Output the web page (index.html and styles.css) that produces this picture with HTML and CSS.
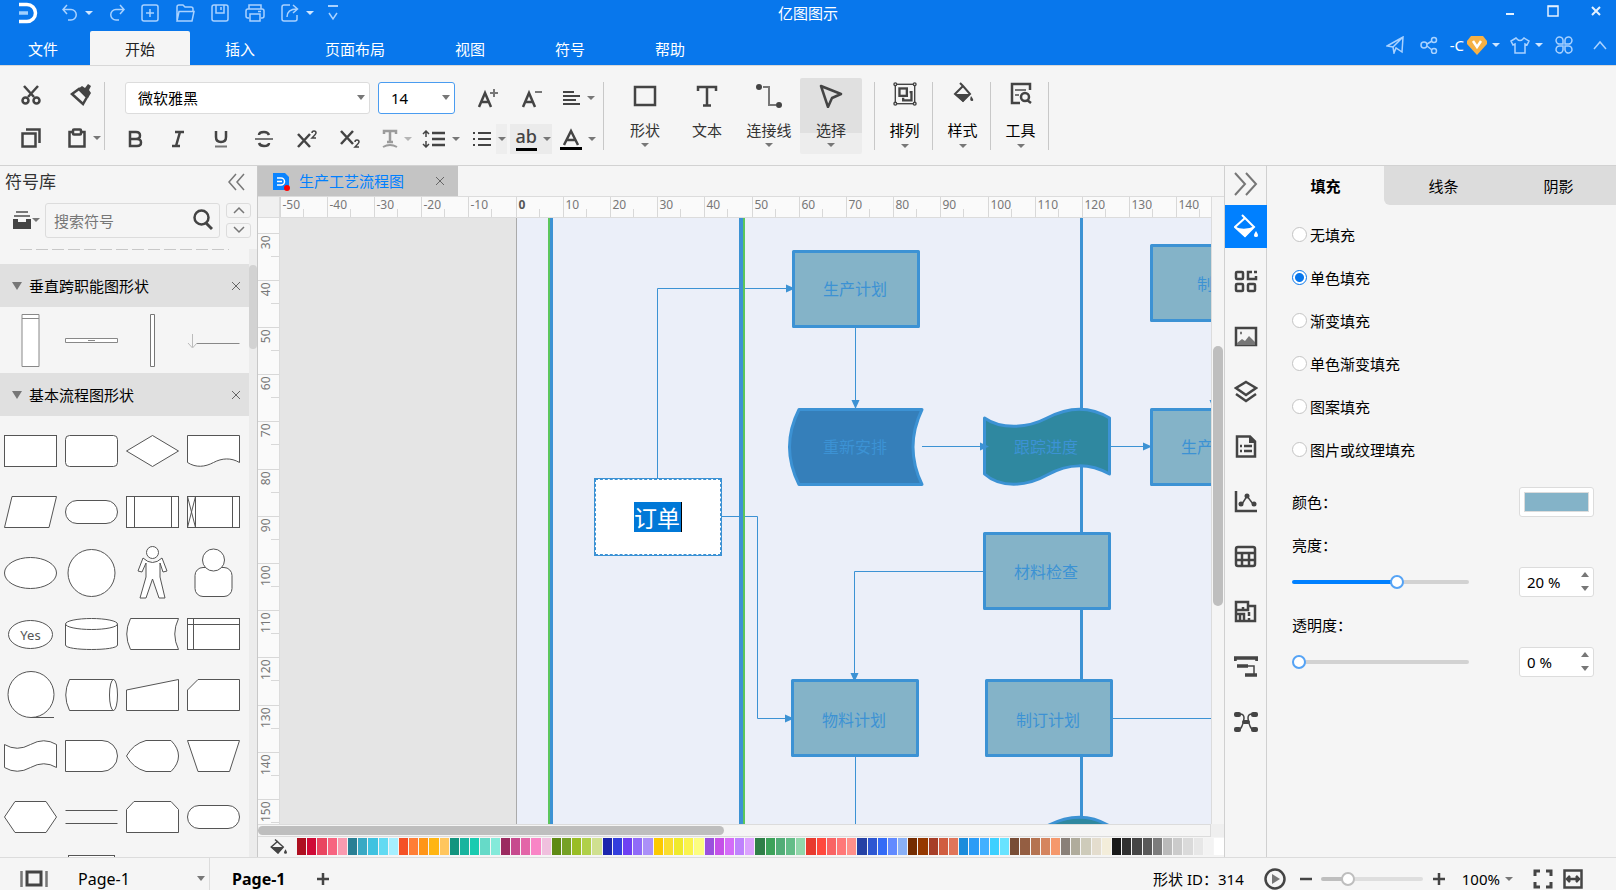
FILE: index.html
```html
<!DOCTYPE html>
<html lang="zh-CN">
<head>
  <meta charset="UTF-8">
  <title>亿图图示</title>
  <link rel="stylesheet" href="styles.css">
</head>
<body>
  <header class="topbar">
    <div class="title-row">
      <svg class="logo" width="20" height="22" viewBox="0 0 20 22"><path d="M1 2.500h8a8 8 0 0 1 0 17H1" fill="none" stroke="#fff" stroke-width="3.500"/><path d="M1 11h9" stroke="#9fd0ff" stroke-width="3.500"/></svg>
      <div class="quick">
        <button class="q-split" aria-label="撤销"><svg width="16" height="18" viewBox="0 0 16 18"><path d="M5 1 1 5.500l4 4.500M1 5.500h8a5 5 0 0 1 0 10.500H6"/></svg><i class="caret"></i></button>
        <button aria-label="重做"><svg width="16" height="18" viewBox="0 0 16 18"><path d="m11 1 4 4.500-4 4.500M15 5.500H7A5 5 0 0 0 7 16h3"/></svg></button>
        <button aria-label="新建"><svg width="18" height="18" viewBox="0 0 18 18"><rect x="1" y="1" width="16" height="16" rx="2"/><path d="M9 5v8M5 9h8"/></svg></button>
        <button aria-label="打开"><svg width="20" height="18" viewBox="0 0 20 18"><path d="M2 16V3q0-2 2-2h4l2 2h6q2 0 2 2v2M2 17 4 7.500h15L17 17z"/></svg></button>
        <button aria-label="保存"><svg width="18" height="18" viewBox="0 0 18 18"><rect x="1" y="1" width="16" height="16" rx="2"/><path d="M5 1v8h8V1M10 3v3"/></svg></button>
        <button aria-label="打印"><svg width="20" height="18" viewBox="0 0 20 18"><path d="M4 5V1h12v4M4 14H3q-2 0-2-2V7q0-2 2-2h14q2 0 2 2v5q0 2-2 2h-1M5 10h10v7H5zM13 7.500h3"/></svg></button>
        <button class="q-split" aria-label="导出"><svg width="18" height="18" viewBox="0 0 18 18"><path d="M9 1H3Q1 1 1 3v12q0 2 2 2h11q2 0 2-2v-4M6 13q0-8 10-8M12 1l4.500 4L12 9"/></svg><i class="caret"></i></button>
        <button class="q-more" aria-label="更多"><svg width="12" height="18" viewBox="0 0 12 18"><path d="M1 2h10" stroke-width="2"/><path d="M2 9l4 6 4-6"/></svg></button>
      </div>
      <h1 class="app-name">亿图图示</h1>
      <div class="window-btns">
        <button aria-label="最小化"><svg width="12" height="12" viewBox="0 0 12 12"><path d="M2 9h8" stroke-width="2"/></svg></button>
        <button aria-label="最大化"><svg width="12" height="12" viewBox="0 0 12 12"><rect x="1" y="1" width="10" height="10"/><path d="M1 1.500h10"/></svg></button>
        <button aria-label="关闭"><svg width="12" height="12" viewBox="0 0 12 12"><path d="m2 2 8 8M10 2l-8 8" stroke-width="2"/></svg></button>
      </div>
    </div>
    <div class="menu-row">
      <nav class="menu">
        <a href="#" class="file">文件</a>
        <a href="#" class="active">开始</a>
        <a href="#">插入</a>
        <a href="#">页面布局</a>
        <a href="#">视图</a>
        <a href="#">符号</a>
        <a href="#">帮助</a>
      </nav>
      <div class="account">
        <button aria-label="发送"><svg width="18" height="18" viewBox="0 0 18 18"><path d="M1 10 17 1l-1 15-6-4-2 5-1-6zM17 1 7 11"/></svg></button>
        <button class="share" aria-label="分享"><svg width="18" height="18" viewBox="0 0 18 18"><circle cx="4" cy="9" r="3"/><circle cx="14" cy="4" r="2.500"/><circle cx="14" cy="15" r="2.500"/><path d="m7 8 5-3M7 10l5 4"/></svg></button>
        <button class="user">-C<svg class="vip" width="20" height="19" viewBox="0 0 20 19"><path d="M4 0h12l4 5v3L10 19 0 8V5z" fill="#f6b145" stroke="none"/><path d="m6 5 4 6 4-6" fill="none" stroke="#fff" stroke-width="2.500"/></svg><i class="caret"></i></button>
        <button class="skin" aria-label="皮肤"><svg width="20" height="18" viewBox="0 0 20 18"><path d="M6 2 1 5l2 4 2-1v9h10V8l2 1 2-4-5-3q-4 5-8 0z"/></svg><i class="caret"></i></button>
        <button aria-label="应用"><svg width="18" height="18" viewBox="0 0 18 18"><path d="M8 8H5a3.500 3.500 0 1 1 3-4zM10 8h3a3.500 3.500 0 1 0-3-4zM8 10H5a3.500 3.500 0 1 0 3 4zM10 10h3a3.500 3.500 0 1 1-3 4z"/></svg></button>
        <button class="fold" aria-label="折叠功能区"><svg width="14" height="10" viewBox="0 0 14 10"><path d="m1 9 6-7 6 7"/></svg></button>
      </div>
    </div>
  </header>

  <section class="ribbon">
    <div class="clip-group">
      <button class="tool" aria-label="剪切"><svg width="20" height="20" viewBox="0 0 20 20"><path d="M3 1l10 11M17 1L7 12"/><circle cx="4.500" cy="15.500" r="3"/><circle cx="15.500" cy="15.500" r="3"/></svg></button>
      <button class="tool" aria-label="格式刷"><svg width="22" height="22" viewBox="0 0 22 22"><path d="m2 10 7-5 8 8-4 7z"/><path class="fill" d="m8 5 4-3 3 2 3-4 3 2-2 4 2 3-3 5z"/></svg></button>
      <button class="tool" aria-label="复制"><svg width="20" height="20" viewBox="0 0 20 20"><rect x="1.500" y="5.500" width="13" height="13"/><path d="M5 1.500h13.500V15"/></svg></button>
      <button class="tool split paste" aria-label="粘贴"><svg width="20" height="20" viewBox="0 0 20 20"><path d="M6 4H2.500v14.500h15V4H14"/><rect x="6" y="1.500" width="8" height="5" rx="1"/></svg><i class="caret"></i></button>
    </div>
    <span class="sep"></span>
    <div class="font-group">
      <div class="row row-fonts">
        <span class="select-box name"><select aria-label="字体"><option>微软雅黑</option></select></span>
        <span class="select-box size"><select aria-label="字号"><option>14</option></select></span>
        <div class="row-tools">
          <button class="tool" aria-label="增大字号"><svg width="22" height="22" viewBox="0 0 22 22"><path d="m2 20 6-14 6 14M4 15h8"/><path d="M17 2v8M13 6h8" stroke="#777" stroke-width="2"/></svg></button>
          <button class="tool" aria-label="减小字号"><svg width="22" height="22" viewBox="0 0 22 22"><path d="m2 20 6-14 6 14M4 15h8"/><path d="M14 5h7" stroke="#777" stroke-width="2"/></svg></button>
          <button class="tool split" aria-label="对齐"><svg width="20" height="16" viewBox="0 0 20 16"><path d="M2 2h11M2 6h17M2 10h13M2 14h17" stroke-width="2"/></svg><i class="caret"></i></button>
        </div>
      </div>
      <div class="row row-style">
        <button class="tool" aria-label="加粗"><svg width="16" height="18" viewBox="0 0 16 18"><path d="M3 2h6q4 0 4 3.500T9 9H3zM3 9h7q4 0 4 3.500T10 16H3z"/></svg></button>
        <button class="tool" aria-label="倾斜"><svg width="16" height="18" viewBox="0 0 16 18"><path d="M5 2h9M2 16h8M10 2 6 16"/></svg></button>
        <button class="tool" aria-label="下划线"><svg width="16" height="18" viewBox="0 0 16 18"><path d="M3 1v6q0 5 5 5t5-5V1"/><path d="M2 16.500h12" stroke="#777" stroke-width="2"/></svg></button>
        <button class="tool" aria-label="删除线"><svg width="20" height="18" viewBox="0 0 20 18"><path d="M15 5q-1-3-5-3-5 0-5 3M5 13q1 3 5 3 5 0 5-3"/><path d="M1 9h18" stroke="#777" stroke-width="2"/></svg></button>
        <button class="tool" aria-label="上标"><svg width="22" height="18" viewBox="0 0 22 18"><path d="m2 4 12 13M14 4 2 17"/><path d="M16 3q0-2 2-2t2 2q0 1-4 5h4" stroke-width="1.500"/></svg></button>
        <button class="tool" aria-label="下标"><svg width="22" height="18" viewBox="0 0 22 18"><path d="m2 1 12 13M14 1 2 14"/><path d="M16 12q0-2 2-2t2 2q0 1-4 5h4" stroke-width="1.500"/></svg></button>
        <button class="tool split dim" aria-label="文字效果"><svg width="16" height="20" viewBox="0 0 16 20"><path d="M2 5V2h12v3M8 2v11M5 13h6"/><path d="M1 18q7-4 14 0" stroke-width="2"/></svg><i class="caret"></i></button>
        <button class="tool split spacing" aria-label="行距"><svg width="24" height="18" viewBox="0 0 24 18"><path d="M10 3h13M10 9h13M10 15h13"/><path d="M4 1v6M1 4l3-3 3 3M4 17v-6M1 14l3 3 3-3" stroke-width="1.500"/></svg><i class="caret"></i></button>
        <button class="tool split list" aria-label="项目符号"><svg width="20" height="18" viewBox="0 0 20 18"><path d="M6 3h13M6 9h13M6 15h13M1 3h2M1 9h2M1 15h2" stroke-width="2"/></svg><i class="caret"></i></button>
        <button class="tool split mark" aria-label="突出显示"><span class="ink">ab</span><i class="caret"></i></button>
        <button class="tool split colour" aria-label="字体颜色"><svg width="22" height="22" viewBox="0 0 22 22"><path d="m4 17 7-14 7 14M7 12h8"/><path d="M0 20.500h22" stroke="#000" stroke-width="3"/></svg><i class="caret"></i></button>
      </div>
    </div>
    <span class="sep"></span>
    <div class="insert-group">
      <button class="big"><svg width="24" height="24" viewBox="0 0 24 24"><rect x="2" y="3" width="20" height="18"/></svg><span>形状</span><i class="caret"></i></button>
      <button class="big"><svg width="24" height="24" viewBox="0 0 24 24"><path d="M3 7V3h18v4M12 3v18M8 21.500h8"/></svg><span>文本</span></button>
      <button class="big"><svg width="26" height="24" viewBox="0 0 26 24"><path d="M7 3h6v18h7" stroke="#777" stroke-width="2"/><circle class="fill" cx="3" cy="3" r="3"/><circle class="fill" cx="23" cy="21" r="3"/></svg><span>连接线</span><i class="caret"></i></button>
      <button class="big pressed"><svg width="24" height="24" viewBox="0 0 24 24"><path d="m2 2 20 8-9 4-4 9z" stroke-linejoin="round"/></svg><span>选择</span><i class="caret"></i></button>
    </div>
    <div class="format-group">
      <button class="big"><svg width="26" height="26" viewBox="0 0 26 26"><rect x="2.500" y="2.500" width="21" height="21" stroke-width="1.500"/><g fill="#f5f5f5" stroke-width="1.500"><circle cx="2.500" cy="2.500" r="1.500"/><circle cx="23.500" cy="2.500" r="1.500"/><circle cx="2.500" cy="23.500" r="1.500"/><circle cx="23.500" cy="23.500" r="1.500"/></g><rect x="7" y="7" width="8" height="8"/><path d="M18 11h2v9h-9v-3"/></svg><span>排列</span><i class="caret"></i></button>
      <button class="big"><svg width="24" height="24" viewBox="0 0 24 24"><path d="m9 1 3 3 7 8-7 7-8-7 8-8" stroke-width="2"/><path class="fill" d="M4 12h15l-7 8zM20 14q4 5 1 5t-1-5z"/></svg><span>样式</span><i class="caret"></i></button>
      <button class="big"><svg width="24" height="24" viewBox="0 0 24 24"><path d="M21 8V2H3v19h8M22 21l-4-3"/><path d="M6 8h11M6 13h4" stroke="#777" stroke-width="2"/><circle cx="16" cy="15" r="4"/></svg><span>工具</span><i class="caret"></i></button>
    </div>
  </section>

  <main class="main">
    <aside class="library">
      <div class="lib-head">
        <h2>符号库</h2>
        <button aria-label="收起"><svg width="18" height="18" viewBox="0 0 18 18"><path d="M8 1 1 9l7 8M16 1 9 9l7 8" fill="none" stroke="#777" stroke-width="1.500"/></svg></button>
      </div>
      <div class="lib-search">
        <button class="lib-menu" aria-label="符号库菜单"><svg width="18" height="18" viewBox="0 0 18 18"><path d="M3 1h12M1 5h16" stroke="#777" stroke-width="2"/><path fill="#444" d="M0 8h5v3h8V8h5v10H0z"/></svg><i class="caret"></i></button>
        <div class="search-box">
          <input type="text" placeholder="搜索符号" aria-label="搜索符号">
          <svg width="20" height="22" viewBox="0 0 20 22"><circle cx="8.500" cy="8.500" r="7" fill="none" stroke="#444" stroke-width="2.500"/><path d="m13 14 6 6" stroke="#444" stroke-width="3"/></svg>
        </div>
        <div class="lib-nav">
          <button aria-label="上一个"><svg width="12" height="8" viewBox="0 0 12 8"><path d="m1 7 5-5 5 5" fill="none" stroke="#777" stroke-width="1.500"/></svg></button>
          <button aria-label="下一个"><svg width="12" height="8" viewBox="0 0 12 8"><path d="m1 1 5 5 5-5" fill="none" stroke="#777" stroke-width="1.500"/></svg></button>
        </div>
      </div>
      <div class="lib-body">
        <div class="lib-list">
          <div class="lib-tail"></div>
          <div class="lib-section"><i class="fold-mark"></i><h3>垂直跨职能图形状</h3><button class="close" aria-label="关闭"><svg width="10" height="10" viewBox="0 0 10 10"><path d="m1 1 8 8M9 1 1 9"/></svg></button></div>
          <div class="lanes">
            <svg width="55" height="55" viewBox="0 0 55 55"><g stroke="#888"><path d="M19 1.500h17v52H19zM19 5.500h17" /></g></svg>
            <svg width="55" height="55" viewBox="0 0 55 55"><g stroke="#888"><path d="M1.500 25.500h52v4h-52zM24 27.500h7"/></g></svg>
            <svg width="55" height="55" viewBox="0 0 55 55"><g stroke="#777"><path d="M25.500 1.500h4v52h-4z"/></g></svg>
            <svg width="55" height="55" viewBox="0 0 55 55"><path d="M10.500 30.500h43" stroke="#888"/><path d="M6.500 21v13M2 30l4.500 5 4.500-5" stroke="#bbb" fill="none"/></svg>
          </div>
          <div class="lib-section"><i class="fold-mark"></i><h3>基本流程图形状</h3><button class="close" aria-label="关闭"><svg width="10" height="10" viewBox="0 0 10 10"><path d="m1 1 8 8M9 1 1 9"/></svg></button></div>
          <div class="shapes" id="shapes"></div>
        </div>
        <div class="lib-scroll"><div class="thumb"></div></div>
      </div>
    </aside>

    <section class="workspace">
      <div class="doc-tabs">
        <div class="doc-tab">
          <svg width="18" height="19" viewBox="0 0 18 19"><path d="M0 1h12l4 4v13H0z" fill="#0a84ff"/><path d="M4 6h4a3.500 3.500 0 0 1 0 7H4M4 9.500h5" fill="none" stroke="#fff" stroke-width="1.500"/><circle cx="14" cy="16" r="3" fill="#f00"/></svg>
          <span>生产工艺流程图</span>
          <button class="close" aria-label="关闭文档"><svg width="10" height="10" viewBox="0 0 10 10"><path d="m1 1 8 8M9 1 1 9"/></svg></button>
        </div>
      </div>
      <div class="stage">
        <div class="corner"></div>
        <svg class="ruler-x" id="rulerX"></svg>
        <div class="gutter"></div>
        <svg class="ruler-y" id="rulerY"></svg>
        <div class="canvas">
          <svg class="drawing">
            <defs>
              <marker id="arrow" markerUnits="userSpaceOnUse" markerWidth="9" markerHeight="9" refX="8" refY="4.500" orient="auto"><path d="M0 0.500 9 4.500 0 8.500z" fill="#3c92d4"/></marker>
            </defs>
            <g transform="translate(-280 -218)">
              <rect x="517" y="0" width="1200" height="1200" fill="#ebeff9"/>
              <path d="M516.500 0v1200" stroke="#aaa"/>
              <path d="M1081.500 0v1200" stroke="#3c92d4" stroke-width="3"/>

              <g class="link">
                <path d="M657.500 478V288.500H794" marker-end="url(#arrow)"/>
                <path d="M722 516.500h35.500v202H793" marker-end="url(#arrow)"/>
                <path d="M855.500 328v80" marker-end="url(#arrow)"/>
                <path d="M983 571.500H854.500V681" marker-end="url(#arrow)"/>
                <path d="M855.500 757v200M1113 718.500h200"/>
                <path d="M1111 446.500h40" marker-end="url(#arrow)"/>
                <path d="M1213.500 380v28" marker-end="url(#arrow)"/>
              </g>

              <path d="M549 0v1200M744 0v1200" stroke="#5cc65c" stroke-width="2"/>
              <path d="M551.500 0v1200" stroke="#3c92d4" stroke-width="3"/>
              <path d="M741 0v1200" stroke="#3c92d4" stroke-width="4"/>

              <g class="node">
                <rect x="793.500" y="251.500" width="125" height="75"/>
                <rect x="1151.500" y="245.500" width="125" height="75"/>
                <rect x="1151.500" y="409.500" width="125" height="75"/>
                <rect x="984.500" y="533.500" width="125" height="75"/>
                <rect x="792.500" y="680.500" width="125" height="75"/>
                <rect x="986.500" y="680.500" width="125" height="75"/>
                <path class="stored" d="M799 409.500H922Q904 447 922 484.500H799Q780 447 799 409.500z"/>
                <path class="tape" id="wave" d="M984.500 418C1000 429 1026 429 1047 418S1090 406 1109.500 418V474C1090 463 1068 463 1047 475S1000 488 984.500 474z"/>
                <use href="#wave" y="408"/>
              </g>
              <path class="link" d="M922 446.500h66" marker-end="url(#arrow)"/>

              <g class="label">
                <text x="855" y="295">生产计划</text>
                <text x="855" y="453">重新安排</text>
                <text x="1046" y="453">跟踪进度</text>
                <text x="1046" y="578">材料检查</text>
                <text x="854" y="726">物料计划</text>
                <text x="1048" y="726">制订计划</text>
                <text x="1205" y="290">制</text>
                <text x="1197" y="453">生产</text>
              </g>
            </g>
          </svg>
          <div class="editing"><input type="text" value="订单" aria-label="形状文本"></div>
        </div>
        <div class="scroll-y"><div class="thumb"></div></div>
      </div>
      <div class="scroll-x"><div class="track"><div class="thumb"></div></div></div>
      <div class="palette">
        <button class="palette-fill" aria-label="填充颜色"><svg width="18" height="18" viewBox="0 0 24 24"><path d="m8 2 11 10-7 8-9-8 9-8" fill="none" stroke="#444" stroke-width="2"/><path d="M3 12h16l-7 9zM22 15q4 6 0 6t0-6z" fill="#444"/></svg></button>
        <div class="swatches" id="swatches"></div>
      </div>
    </section>

    <nav class="side-bar">
      <button class="expand" aria-label="展开"><svg width="24" height="24" viewBox="0 0 24 24"><path d="m1 1 10 11L1 23M12 1l10 11-10 11" stroke="#777"/></svg></button>
      <button class="active" aria-label="填充"><svg width="24" height="26" viewBox="0 0 24 26"><path d="m8 1 3 3 9 9-9 9-10-9 10-9" stroke="#fff"/><path d="M1 13q10 4 20-1l-10 11zM22 17q4 6 0 6t0-6z" fill="#fff" stroke="none"/></svg></button>
      <button aria-label="主题"><svg width="24" height="24" viewBox="0 0 24 24"><rect x="2" y="2" width="7" height="7" rx="1"/><path d="M18 2h-4v7h8V6M20 2h3"/><rect x="2" y="14" width="7" height="7" rx="1"/><rect x="14" y="14" width="7" height="7" rx="1"/></svg></button>
      <button aria-label="图片"><svg width="24" height="24" viewBox="0 0 24 24"><rect x="2" y="3" width="20" height="17"/><path d="m3 18 5-4 3 2 4-5 6 6v3H3z" fill="#777" stroke="none"/><path d="M6 8h2" stroke="#777"/></svg></button>
      <button aria-label="图层"><svg width="24" height="24" viewBox="0 0 24 24"><path d="m12 2 10 6-10 7L2 8zM2 14l10 7 10-7"/></svg></button>
      <button aria-label="备注"><svg width="24" height="24" viewBox="0 0 24 24"><path d="M3 1.500h13l5 5v15H3zM10 11h8M10 16h8M6 11h2M6 16h2"/><path class="fill" d="M15 1l7 7h-7z"/></svg></button>
      <button aria-label="图表"><svg width="24" height="24" viewBox="0 0 24 24"><path d="M2 1v20h21"/><path d="m8 14 5-8 6 8" stroke-width="1.500"/><g class="fill"><circle cx="7" cy="14" r="2.500"/><circle cx="13" cy="6" r="2.500"/><circle cx="20" cy="14" r="2.500"/></g></svg></button>
      <button aria-label="表格"><svg width="24" height="24" viewBox="0 0 24 24"><rect x="2" y="2" width="19" height="19" rx="2"/><path d="M2 8h19M2 15h19M8 8v13M15 8v13"/></svg></button>
      <button aria-label="平面图"><svg width="24" height="24" viewBox="0 0 24 24"><path d="M2 2h12v4h7v15H2zM2 10h7V7M14 6v4h-4M2 14h8v7M6 14v7M15 12v4M15 18v3"/></svg></button>
      <button aria-label="甘特图"><svg width="24" height="24" viewBox="0 0 24 24"><path d="M1 6V3h22v3M3 11h11M11 20h12" stroke-width="3.500"/><path d="M13 11h7v9" stroke-width="1.500"/></svg></button>
      <button aria-label="思维导图"><svg width="24" height="24" viewBox="0 0 24 24"><path d="M6 4q4 0 4 4t-2 8q-1 3-3 3M18 4q-4 0-4 4t2 8q1 3 3 3M9 12h6" stroke-width="1.500"/><g class="fill"><rect x="0" y="2" width="7" height="5" rx="2"/><rect x="17" y="2" width="7" height="5" rx="2"/><rect x="0" y="17" width="7" height="5" rx="2"/><rect x="17" y="17" width="7" height="5" rx="2"/><rect x="8" y="10" width="8" height="4" rx="2"/></g></svg></button>
    </nav>

    <aside class="props">
      <div class="prop-tabs">
        <button class="active">填充</button>
        <div class="rest"><button>线条</button><button>阴影</button></div>
      </div>
      <form class="prop-body">
        <label class="radio"><input type="radio" name="fill">无填充</label>
        <label class="radio"><input type="radio" name="fill" checked>单色填充</label>
        <label class="radio"><input type="radio" name="fill">渐变填充</label>
        <label class="radio"><input type="radio" name="fill">单色渐变填充</label>
        <label class="radio"><input type="radio" name="fill">图案填充</label>
        <label class="radio"><input type="radio" name="fill">图片或纹理填充</label>
        <div class="field colour-field">
          <label for="fillColour">颜色：</label>
          <input type="color" id="fillColour" value="#84b3c8">
        </div>
        <label class="field-label" for="light">亮度：</label>
        <div class="field">
          <input type="range" class="light" id="light" min="-100" max="100" value="20">
          <div class="spin"><input type="text" value="20 %" aria-label="亮度值"><button type="button" aria-label="增加"></button><button type="button" class="down" aria-label="减少"></button></div>
        </div>
        <label class="field-label" for="alpha">透明度：</label>
        <div class="field">
          <input type="range" id="alpha" min="0" max="100" value="0">
          <div class="spin"><input type="text" value="0 %" aria-label="透明度值"><button type="button" aria-label="增加"></button><button type="button" class="down" aria-label="减少"></button></div>
        </div>
      </form>
    </aside>
  </main>

  <footer class="status">
    <button class="views" aria-label="页面视图"><svg width="28" height="18" viewBox="0 0 28 18"><path d="M1.500 1v16M26.500 1v16" stroke="#777"/><rect x="7" y="2" width="14" height="13" stroke-width="3"/></svg></button>
    <span class="select-box page"><select aria-label="页面"><option>Page-1</option></select></span>
    <button class="page-tab">Page-1</button>
    <button class="add" aria-label="新建页面"><svg width="14" height="14" viewBox="0 0 14 14"><path d="M7 1v12M1 7h12"/></svg></button>
    <span class="shape-id">形状 ID：314</span>
    <button class="play" aria-label="播放"><svg width="22" height="22" viewBox="0 0 22 22"><circle cx="11" cy="11" r="9.500"/><path d="m8 6 8 5-8 5z" fill="#777" stroke="none"/></svg></button>
    <button class="minus" aria-label="缩小"><svg width="14" height="14" viewBox="0 0 14 14"><path d="M1 7h12"/></svg></button>
    <input type="range" class="zoom" aria-label="缩放" min="0" max="100" value="23">
    <button class="plus" aria-label="放大"><svg width="14" height="14" viewBox="0 0 14 14"><path d="M7 1v12M1 7h12"/></svg></button>
    <button class="percent">100%<i class="caret"></i></button>
    <button class="full" aria-label="全屏"><svg width="20" height="20" viewBox="0 0 20 20"><path d="M2 7V2h5M13 2h5v5M18 13v5h-5M7 18H2v-5" stroke-width="3"/></svg></button>
    <button class="fit" aria-label="适合宽度"><svg width="20" height="20" viewBox="0 0 20 20"><rect x="1.500" y="1.500" width="17" height="17"/><path d="M5 10h10M7 7l-3 3 3 3M13 7l3 3-3 3"/></svg></button>
  </footer>

  <script>
    const NS = "http://www.w3.org/2000/svg";

    // Basic flowchart symbols, drawn in a 55 x 55 cell
    const pill = '<rect x="1.5" y="16.5" width="52" height="23" rx="11.5"/>';
    const box = '<rect x="1.5" y="12.5" width="52" height="31"/>';
    const shapes = [
      box,
      '<rect x="1.5" y="12.5" width="52" height="31" rx="4"/>',
      '<path d="M1.5 28 27.500 12.500 53.500 28 27.500 43.500z"/>',
      '<path d="M1.5 12.500H53.500V39.500C45 34.500 36 35 27.500 39.500S10 45 1.500 39.500z"/>',
      '<path d="M9 12.500H53.500L46 43.500H1.500z"/>',
      pill,
      box + '<path d="M9.500 12.500v31M46.500 12.500v31"/>',
      box + '<path d="M9.500 12.500v31M46.500 12.500v31M1.500 12.500l8 31M9.500 12.500l-8 31"/>',
      '<ellipse cx="27.5" cy="28" rx="26" ry="15.5"/>',
      '<circle cx="27.5" cy="28" r="23.5"/>',
      '<circle cx="27.5" cy="7.5" r="6"/><path d="M18 13 13 26l4 1 4-9v14l-6 21h6l6.500-19L34 53h6l-5-21V18l3 9 4-1-5-13q-9.500 9-19 0z"/>',
      '<rect x="9" y="22.5" width="37" height="29" rx="8"/><circle cx="27.5" cy="15" r="11"/>',
      '<ellipse cx="27.5" cy="28.5" rx="22" ry="14"/><text x="27.5" y="34">Yes</text>',
      '<path d="M1.500 18v21c0 6 52 6 52 0V18"/><ellipse cx="27.5" cy="18" rx="26" ry="5.5"/>',
      '<path d="M5.500 12.500h48Q46 28 53.500 43.500h-48Q-2 28 5.500 12.500z"/>',
      box + '<path d="M1.500 18.500h52M7.500 12.500v31"/>',
      '<circle cx="28" cy="27.5" r="23"/><path d="M28 50.500h23"/>',
      '<path d="M5.500 12.500H49.500V43.500H5.500Q-2 28 5.500 12.500z"/><ellipse cx="49.5" cy="28" rx="4" ry="15.5"/>',
      '<path d="M1.500 23 53.500 12.500v31h-52z"/>',
      '<path d="M12 12.500h41.500v31h-52V23z"/>',
      '<path d="M1.500 16.500Q14 24 27.500 16.500T53.500 16.500V39.500Q41 32 27.500 39.500T1.500 39.500z"/>',
      '<path d="M1.500 12.500H38a15.500 15.500 0 0 1 0 31H1.500z"/>',
      '<path d="M21 12.500H46Q53.500 20 53.500 28T46 43.500H21Q8 40 1.500 28 8 16 21 12.500z"/>',
      '<path d="M1.500 12.500h52l-10 31H12z"/>',
      '<path d="M12 12.500h31L53.500 28 43 43.500H12L1.500 28z"/>',
      '<path d="M1.500 21.500h52M1.500 34.500h52"/>',
      '<path d="M9 12.500h37l7.500 8v23h-52v-23z"/>',
      pill,
      '',
      '<rect x="4.500" y="5.500" width="46" height="44"/>'
    ];
    document.getElementById("shapes").innerHTML = shapes
      .map(s => `<svg width="55" height="55" viewBox="0 0 55 55">${s}</svg>`)
      .join("");

    // Quick colours, five shades in a group
    const colours = [
      "#ae0f20 #cf0a36 #e94560 #f76480 #f99bb0", "#297f94 #39a9c4 #3fc2e0 #62daf2 #a6efff",
      "#f45126 #ff7e36 #ff9518 #ffb512 #ffc65e", "#12947e #18b49e #1acbb0 #66dac8 #84eada",
      "#9b2a60 #c74a8e #e366a8 #f985c6 #f0c0de", "#5f8a14 #76a125 #99bd25 #b0d04a #d0e090",
      "#1c26ad #333edd #6e40f3 #906bf8 #ab90f8", "#fcc900 #fadd2e #efe92c #faf34e #fcfd80",
      "#9b50de #c550e8 #d46cf8 #bf82fd #dca2fe", "#2f7f48 #3da25a #52ad77 #64bd88 #92d7ab",
      "#e83a2e #ff493d #f96464 #ff7878 #ff908a", "#2541a4 #2e57d2 #346bf6 #628aff #8ab0f6",
      "#742c00 #953800 #a63e28 #d05d40 #e0755a", "#1a8cdc #2b9cf6 #42b0ff #3dd0ff #68e3ff",
      "#784d36 #945e42 #b57350 #d5855f #f5986c", "#8a8078 #b0ac9c #cecbba #e4ddce #f3edda",
      "#191919 #303030 #454545 #595959 #7c7c7c", "#bababa #cbcbcb #dadada #e7e7e7 #f3f3f3",
      "#ffffff"
    ];
    document.getElementById("swatches").innerHTML = colours
      .map(g => g.split(" ").map(c => `<button style="background:${c}" aria-label="${c}"></button>`).join(""))
      .map(g => `<div class="shades">${g}</div>`)
      .join("");

    // Rulers: 10 mm is 47.2 px on screen
    const STEP = 47.2;

    function add(parent, name, attrs, text) {
      const el = document.createElementNS(NS, name);
      for (const k in attrs) el.setAttribute(k, attrs[k]);
      if (text !== undefined) el.textContent = text;
      parent.appendChild(el);
    }

    function drawRulers() {
      const rx = document.getElementById("rulerX");
      const ry = document.getElementById("rulerY");
      rx.innerHTML = ry.innerHTML = "";

      const w = rx.getBoundingClientRect().width;
      for (let i = 0; i * STEP + 26 < w; i++) {
        const x = Math.floor(i * STEP) + 0.5;
        const mm = i * 10 - 50;
        add(rx, "path", { d: `M${x} 0v20M${x + 23} 12v8` });
        add(rx, "text", { x: x + 2, y: 12, class: mm === 0 ? "zero" : "" }, mm);
      }

      const h = ry.getBoundingClientRect().height;
      for (let i = 0; i * STEP + 38 < h; i++) {
        const y = Math.floor(i * STEP) + 15.5;
        add(ry, "path", { d: `M0 ${y}h21M13 ${y + 23}h8` });
        add(ry, "text", { transform: `translate(12 ${y + 2}) rotate(-90)`, "text-anchor": "end" }, i * 10 + 30);
      }
    }

    drawRulers();
    window.addEventListener("resize", drawRulers);
  </script>
</body>
</html>
```
FILE: styles.css
```css
* {
  box-sizing: border-box;
}

html, body {
  margin: 0;
  height: 100%;
}

body {
  display: flex;
  flex-direction: column;
  overflow: hidden;
  background: #f5f5f5;
  color: #000;
  font-family: "Noto Sans", "Noto Sans CJK SC", sans-serif;
  font-size: 15px;
  line-height: 20px;
}

button, input, select {
  font: inherit;
  color: inherit;
}

button {
  display: flex;
  align-items: center;
  justify-content: center;
  margin: 0;
  padding: 0;
  border: 0;
  background: none;
}

h1, h2, h3 {
  margin: 0;
  font-weight: normal;
}

svg {
  display: block;
  flex: none;
}

.caret {
  flex: none;
  border: 4px solid transparent;
  border-top-color: #777;
  border-bottom: 0;
}

.close {
  width: 20px;
  height: 20px;
}

.close svg {
  fill: none;
  stroke: #666;
}

/* top bar */
.topbar {
  flex: none;
  background: #0877ec;
  color: #fff;
}

.topbar .caret {
  border-top-color: #cfe6ff;
}

.topbar button svg {
  fill: none;
  stroke: #a9d2ff;
  stroke-width: 1.5;
}

.title-row {
  position: relative;
  display: flex;
  align-items: center;
  justify-content: space-between;
  height: 25px;
  padding: 0 14px 0 18px;
}

.quick {
  display: flex;
  flex: 1;
  gap: 16px;
  margin-left: 24px;
}

.q-split {
  gap: 7px;
}

.q-more {
  margin-left: -3px;
}

.app-name {
  position: absolute;
  left: 50%;
  transform: translateX(-50%);
  font-size: 15px;
}

.window-btns {
  display: flex;
  gap: 31px;
  margin-bottom: 4px;
}

.topbar .window-btns svg {
  stroke: #e4f1ff;
}

.menu-row {
  display: flex;
  justify-content: space-between;
  height: 40px;
  padding: 6px 9px 0 0;
}

.menu {
  display: flex;
}

.menu a {
  padding: 8px 35px 0;
  color: #fff;
  text-decoration: none;
}

.menu .file {
  padding: 8px 32px 0 28px;
}

.menu .active {
  background: #f5f5f5;
  color: #222;
  border-radius: 2px 2px 0 0;
}

.account {
  display: flex;
  align-items: center;
  gap: 16px;
  padding-bottom: 6px;
}

.user {
  gap: 3px;
  margin-left: -4px;
}

.user .caret {
  margin-left: 2px;
}

.skin {
  gap: 5px;
  margin-left: -6px;
}

.skin + button {
  margin-left: -4px;
}

.fold {
  margin-left: 4px;
}

/* ribbon */
.ribbon {
  display: flex;
  flex: none;
  height: 101px;
  padding: 8px 0;
  border-top: 1px solid #d8d8d8;
  border-bottom: 1px solid #d2d2d2;
}

.ribbon svg {
  fill: none;
  stroke: #444;
  stroke-width: 2.5;
}

.ribbon .fill, .side-bar .fill {
  fill: #444;
  stroke: none;
}

.sep {
  width: 1px;
  height: 68px;
  margin-top: 8px;
  background: #c8c8c8;
}

.clip-group {
  display: grid;
  grid-template-columns: 40px 40px;
  grid-template-rows: 42px 44px;
  column-gap: 10px;
  padding: 0 3px 0 11px;
}

.tool {
  width: 40px;
}

.split {
  justify-content: flex-end;
  gap: 6px;
  padding-right: 1px;
}

.paste {
  padding-right: 0;
}

.font-group {
  display: flex;
  flex-direction: column;
  padding: 0 6px 0 10px;
}

.row {
  display: flex;
  height: 42px;
}

.row-fonts {
  align-items: center;
  gap: 8px;
  padding: 6px 0 0 10px;
}

.row-tools {
  display: flex;
  gap: 4px;
  margin-left: 5px;
}

.row-style {
  gap: 3px;
}

.row-style .tool {
  height: 30px;
  margin-top: 8px;
}

.select-box {
  position: relative;
  display: block;
}

.select-box::after {
  content: "";
  position: absolute;
  top: 13px;
  right: 5px;
  border: 4px solid transparent;
  border-top: 5px solid #777;
  border-bottom: 0;
}

.select-box select {
  width: 100%;
  height: 32px;
  padding: 0 12px;
  appearance: none;
  background: #fff;
  border: 1px solid #dcdcdc;
  border-radius: 3px;
}

.name {
  width: 245px;
}

.size {
  width: 77px;
}

.select-box.size select {
  border-color: #4a9cf0;
}

.dim {
  opacity: 0.5;
}

.row-style .spacing {
  width: 45px;
}

.row-style .list {
  width: 43px;
  background: linear-gradient(to right, transparent 32px, #eee 32px);
}

.row-style .mark, .row-style .colour {
  width: 42px;
}

.mark {
  background: #ebebeb;
}

.ink {
  height: 25px;
  border-bottom: 3px solid #000;
  color: #444;
  font-size: 18px;
  font-weight: 500;
}

.insert-group {
  display: flex;
  padding: 0 12px 0 10px;
}

.big {
  flex-direction: column;
  justify-content: flex-start;
  width: 62px;
  height: 76px;
  margin-top: 4px;
  padding-top: 6px;
  color: #333;
  border-radius: 2px;
}

.big span {
  margin: auto 0 3px;
}

.big svg {
  height: 24px;
}

.big::after {
  content: "";
  height: 7px;
}

.big:not(:has(.caret))::after {
  height: 11px;
}

.pressed {
  background: linear-gradient(#e0e0e0 55px, #ededed 55px);
}

.format-group {
  display: flex;
  height: 68px;
  margin-top: 8px;
  border-left: 1px solid #c8c8c8;
}

.format-group .big {
  width: 58px;
  height: 68px;
  margin: 0;
  padding: 0 0 0 2px;
  border-right: 1px solid #c8c8c8;
  border-radius: 0;
  color: #000;
}

.format-group .big::after {
  height: 2px;
}

.format-group span {
  margin-bottom: 4px;
}

/* main area */
.main {
  display: flex;
  flex: 1;
  min-height: 0;
}

.library {
  display: flex;
  flex: none;
  flex-direction: column;
  width: 258px;
  border-right: 1px solid #c8c8c8;
}

.lib-head {
  display: flex;
  align-items: center;
  justify-content: space-between;
  height: 32px;
  padding: 0 11px 0 5px;
}

.lib-head h2 {
  color: #333;
  font-size: 17px;
}

.lib-search {
  display: flex;
  align-items: center;
  height: 51px;
  padding: 0 6px 7px 14px;
  gap: 6px;
}

.lib-menu {
  gap: 1px;
  width: 25px;
}

.search-box {
  position: relative;
  flex: 1;
}

.search-box input {
  width: 100%;
  height: 35px;
  padding: 2px 30px 0 8px;
  background: transparent;
  border: 1px solid #dcdcdc;
  border-radius: 3px;
}

.search-box input::placeholder {
  color: #777;
}

.search-box svg {
  position: absolute;
  top: 6px;
  right: 7px;
}

.lib-nav {
  display: flex;
  flex-direction: column;
  gap: 5px;
}

.lib-nav button {
  width: 25px;
  height: 15px;
  border: 1px solid #dcdcdc;
  border-radius: 3px;
}

.lib-body {
  display: flex;
  flex: 1;
  min-height: 0;
}

.lib-list {
  flex: 1;
  overflow: hidden;
}

.lib-tail {
  height: 15px;
  margin: 0 20px;
  background: repeating-linear-gradient(to right, #c8c8c8 0 12px, transparent 12px 16px) top / 100% 1px no-repeat;
}

.lib-section {
  display: flex;
  align-items: center;
  height: 43px;
  padding: 0 3px 0 12px;
  background: #e0e0e0;
}

.lib-section h3 {
  flex: 1;
  margin-left: 7px;
  font-size: 15px;
}

.fold-mark {
  border: 5px solid transparent;
  border-top: 8px solid #777;
  border-bottom: 0;
}

.lanes, .shapes {
  display: grid;
  grid-template-columns: repeat(4, 61px);
  grid-auto-rows: 61px;
  place-items: center;
}

.lanes {
  grid-auto-rows: 66px;
}

.lanes svg, .shapes svg {
  fill: #fff;
  stroke: #555;
}

.shapes {
  padding-top: 4px;
}

.shapes text {
  fill: #555;
  stroke: none;
  font-size: 13px;
  text-anchor: middle;
}

.lib-scroll {
  width: 8px;
  padding-top: 16px;
  background: #ececec;
}

.lib-scroll .thumb {
  height: 84px;
  background: #d2d2d2;
  border-radius: 4px;
}

/* document */
.workspace {
  display: flex;
  flex: 1;
  flex-direction: column;
  min-width: 0;
}

.doc-tabs {
  display: flex;
  height: 31px;
  border-bottom: 1px solid #dcdcdc;
}

.doc-tab {
  display: flex;
  align-items: center;
  width: 200px;
  padding: 0 8px 0 15px;
  background: #c4c4c4;
}

.doc-tab span {
  flex: 1;
  margin-left: 8px;
  color: #0080ff;
}

.stage {
  display: grid;
  flex: 1;
  grid-template-columns: 22px 1fr 13px;
  grid-template-rows: 21px 1fr;
  min-height: 0;
}

.corner {
  background: #f0f0f0;
  border-right: 1px solid #dcdcdc;
  border-bottom: 1px solid #dcdcdc;
}

.ruler-x, .ruler-y {
  width: 100%;
  height: 100%;
  background: #fafafa;
  stroke: #d8d8d8;
  overflow: hidden;
}

.ruler-x {
  border-bottom: 1px solid #dcdcdc;
}

.ruler-y {
  min-height: 0;
  border-right: 1px solid #dcdcdc;
}

.ruler-x text, .ruler-y text {
  fill: #777;
  stroke: none;
  font-size: 12px;
}

.ruler-x .zero {
  fill: #555;
  font-weight: bold;
}

.gutter, .scroll-y {
  border-left: 1px solid #dcdcdc;
}

.scroll-y {
  padding: 128px 1px 0;
}

.scroll-y .thumb {
  height: 260px;
  background: #bebebe;
  border-radius: 5px;
}

.canvas {
  position: relative;
  min-height: 0;
  overflow: hidden;
  background: #e5e5e5;
}

.drawing {
  position: absolute;
  width: 100%;
  height: 100%;
}

.link {
  fill: none;
  stroke: #3c92d4;
}

.node {
  fill: #84b3c8;
  stroke: #3c92d4;
  stroke-width: 3;
  stroke-linejoin: round;
}

.stored {
  fill: #357fba;
}

.tape {
  fill: #2f88a0;
}

.label text {
  fill: #3c92d4;
  font-size: 16px;
  text-anchor: middle;
}

.editing {
  position: absolute;
  left: 314px;
  top: 260px;
  display: flex;
  align-items: center;
  justify-content: center;
  width: 128px;
  height: 78px;
  background: #fff;
  border: 1px solid #3c92d4;
  outline: 1px dashed #3c92d4;
  outline-offset: -2px;
}

.editing input {
  width: 48px;
  height: 30px;
  padding: 0;
  background: #0078d7;
  border: 0;
  border-right: 1px solid #000;
  border-radius: 0;
  color: #fff;
  font-size: 23px;
}

.scroll-x {
  height: 13px;
  padding-right: 13px;
  background: #efefef;
}

.track {
  height: 13px;
  padding: 1px 0;
  background: #f5f5f5;
  border: 1px solid #dcdcdc;
  border-left: 0;
}

.scroll-x .thumb {
  width: 49%;
  height: 9px;
  background: #bebebe;
  border-radius: 5px;
}

.palette {
  display: flex;
  height: 20px;
  padding: 1px 0 2px;
}

.palette-fill {
  width: 39px;
}

.swatches {
  display: flex;
  flex: 1;
  gap: 1px;
}

.shades {
  display: flex;
  flex: 5;
  gap: 1px;
}

.shades:last-child {
  flex: 1;
}

.shades button {
  flex: 1;
}

/* right tool strip */
.side-bar {
  display: flex;
  flex: none;
  flex-direction: column;
  gap: 12px;
  width: 43px;
  border: 1px solid #d0d0d0;
  border-width: 0 1px;
}

.side-bar button {
  height: 43px;
}

.side-bar .expand {
  height: 39px;
  margin-bottom: -12px;
  padding-bottom: 4px;
}

.side-bar .active {
  margin-right: -1px;
  background: #0080ff;
}

.side-bar svg {
  fill: none;
  stroke: #444;
  stroke-width: 2.5;
}

.side-bar .expand svg, .side-bar .active svg {
  stroke-width: 2;
}

/* properties */
.props {
  flex: none;
  width: 349px;
}

.prop-tabs {
  display: flex;
  height: 39px;
}

.prop-tabs > .active {
  width: 117px;
  font-weight: bold;
}

.rest {
  display: flex;
  flex: 1;
  padding-left: 2px;
  background: #dcdcdc;
  border-radius: 0 0 0 6px;
}

.rest button {
  flex: 1;
}

.prop-body {
  padding: 8px 22px 0 25px;
}

.radio {
  display: flex;
  align-items: center;
  gap: 3px;
  height: 43px;
}

.radio input {
  width: 15px;
  height: 15px;
  margin: 0;
  appearance: none;
  background: #fff;
  border: 1px solid #c4c4c4;
  border-radius: 50%;
}

.radio input:checked {
  border-color: #0877ec;
  background: radial-gradient(#0877ec 4px, #fff 5px);
}

.field {
  display: flex;
  align-items: center;
  justify-content: space-between;
  height: 30px;
}

.colour-field {
  margin-top: 16px;
}

.field-label {
  display: block;
  height: 50px;
  padding-top: 18px;
}

input[type="color"] {
  width: 75px;
  height: 30px;
  padding: 4px;
  appearance: none;
  background: #fff;
  border: 1px solid #dcdcdc;
  border-radius: 3px;
}

input[type="color"]::-webkit-color-swatch-wrapper {
  padding: 0;
}

input[type="color"]::-webkit-color-swatch {
  border: 1px solid #dcdcdc;
}

input[type="range"] {
  width: 177px;
  height: 14px;
  margin: 0;
  appearance: none;
  background: none;
}

input[type="range"]::-webkit-slider-runnable-track {
  height: 4px;
  background: #d2d2d2;
  border-radius: 2px;
}

input[type="range"]::-webkit-slider-thumb {
  width: 14px;
  height: 14px;
  margin-top: -5px;
  appearance: none;
  background: #fff;
  border: 2px solid #55a3f5;
  border-radius: 50%;
}

.light::-webkit-slider-runnable-track {
  background: linear-gradient(to right, #0080ff 60%, #d2d2d2 60%) !important;
}

.spin {
  position: relative;
  width: 75px;
}

.spin input {
  width: 100%;
  height: 30px;
  padding: 0 20px 0 7px;
  background: #fff;
  border: 1px solid #dcdcdc;
  border-radius: 3px;
}

.spin button {
  position: absolute;
  top: 5px;
  right: 5px;
  border: 4px solid transparent;
  border-top: 0;
  border-bottom: 5px solid #777;
}

.spin .down {
  top: 19px;
  border-top: 5px solid #777;
  border-bottom: 0;
}

/* status bar */
.status {
  display: flex;
  flex: none;
  align-items: center;
  height: 33px;
  padding: 9px 33px 0 20px;
  border-top: 1px solid #dcdcdc;
}

.status svg {
  fill: none;
  stroke: #444;
  stroke-width: 2.5;
}

.page {
  width: 152px;
  margin-left: 10px;
  margin-top: -9px;
}

.select-box.page select {
  padding: 10px 20px 0;
  background: none;
  border-width: 0 1px 0 0;
  border-radius: 0;
  font-size: 16px;
}

.page::after {
  top: 18px;
}

.page-tab {
  margin-left: 22px;
  font-size: 16px;
  font-weight: bold;
}

.add {
  margin-left: 31px;
}

.shape-id {
  margin-left: auto;
}

.play {
  margin-left: 20px;
}

.minus {
  margin-left: 13px;
}

.status .zoom {
  width: 102px;
  margin: 0 9px 0 8px;
}

.zoom::-webkit-slider-runnable-track {
  background: linear-gradient(to right, #bebebe 25%, #dedede 25%) !important;
}

.zoom::-webkit-slider-thumb {
  border-color: #bebebe !important;
}

.percent {
  gap: 5px;
  margin-left: 16px;
}

.full {
  margin-left: 20px;
}

.fit {
  margin-left: 10px;
}
```
